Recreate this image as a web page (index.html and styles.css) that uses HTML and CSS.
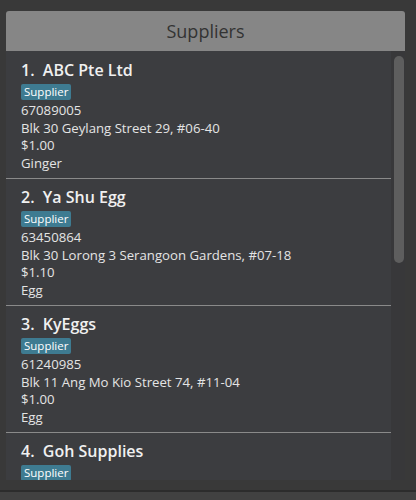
FILE: index.html
```html
<!DOCTYPE html>
<html>
<head>
<meta charset="utf-8">
<link rel="stylesheet" href="styles.css">
</head>
<body>
<div class="panel">
  <div class="header">Suppliers</div>
  <div class="body">
    <div class="list">
      <div class="cell">
        <div class="title">1.&nbsp; ABC Pte Ltd</div>
        <div class="tags"><span class="tag">Supplier</span></div>
        <div class="line">67089005</div>
        <div class="line">Blk 30 Geylang Street 29, #06-40</div>
        <div class="line">$1.00</div>
        <div class="line">Ginger</div>
      </div>
      <div class="cell">
        <div class="title">2.&nbsp; Ya Shu Egg</div>
        <div class="tags"><span class="tag">Supplier</span></div>
        <div class="line">63450864</div>
        <div class="line">Blk 30 Lorong 3 Serangoon Gardens, #07-18</div>
        <div class="line">$1.10</div>
        <div class="line">Egg</div>
      </div>
      <div class="cell">
        <div class="title">3.&nbsp; KyEggs</div>
        <div class="tags"><span class="tag">Supplier</span></div>
        <div class="line">61240985</div>
        <div class="line">Blk 11 Ang Mo Kio Street 74, #11-04</div>
        <div class="line">$1.00</div>
        <div class="line">Egg</div>
      </div>
      <div class="cell last">
        <div class="title">4.&nbsp; Goh Supplies</div>
        <div class="tags"><span class="tag">Supplier</span></div>
      </div>
    </div>
    <div class="track"><div class="thumb"></div></div>
  </div>
</div>
<div class="footer"></div>
</body>
</html>
```

FILE: styles.css
```css
html, body {
  margin: 0;
  padding: 0;
  background: #393939;
  font-family: "Open Sans", "Noto Sans", sans-serif;
  overflow: hidden;
}
.panel {
  padding: 11px 11px 0 6px;
  height: 480px;
  box-sizing: border-box;
  display: flex;
  flex-direction: column;
}
.header {
  height: 40px;
  flex: none;
  background: #868686;
  border-radius: 3px 3px 0 0;
  color: #333333;
  font-size: 18px;
  display: flex;
  align-items: center;
  justify-content: center;
  width: 399px;
}
.body {
  display: flex;
  height: 429px;
}
.list {
  width: 385px;
  background: #3c3d40;
  overflow: hidden;
  padding-top: 1px;
  box-sizing: border-box;
}
.track {
  width: 14px;
  background: #38383a;
  padding: 5px 1px 0 3px;
  box-sizing: border-box;
}
.thumb {
  width: 10px;
  height: 207px;
  background: #5e5e5e;
  border-radius: 5px;
}
.cell {
  border-bottom: 1px solid #8a8a8a;
  padding: 7px 0 0 15px;
  height: 119px;
}
.cell.last {
  border-bottom: none;
}
.title {
  font-size: 16px;
  font-weight: 600;
  color: #f0f0f0;
  line-height: 22px;
}
.tags {
  margin-top: 3px;
  height: 16px;
  display: flex;
}
.tag {
  background: #3e7b91;
  color: #ffffff;
  font-size: 11.5px;
  line-height: 16px;
  padding: 0 3px;
  border-radius: 2px;
}
.line {
  font-size: 13.2px;
  line-height: 17.7px;
  color: #e4e4e4;
}
.tags + .line {
  margin-top: 2px;
}
.footer {
  margin-top: 10px;
  border-top: 2px solid #2c2c2c;
  height: 10px;
  background: #414141;
}
```
